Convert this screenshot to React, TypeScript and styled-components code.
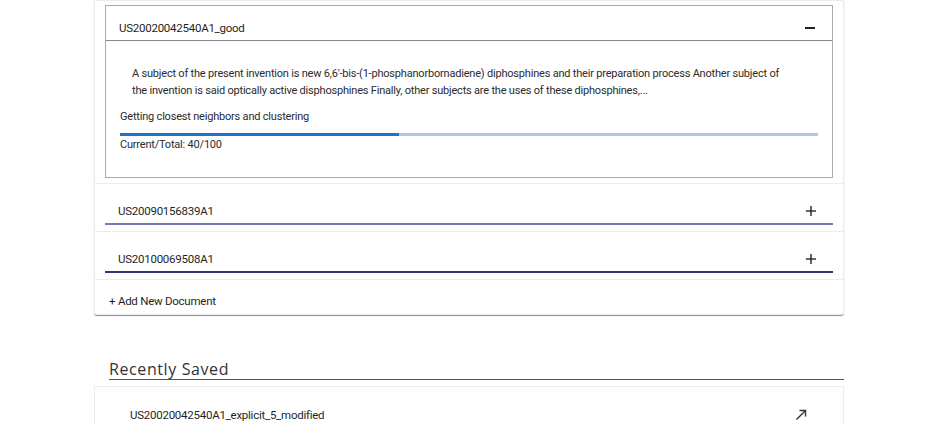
import React from "react";
import styled, { createGlobalStyle } from "styled-components";

const GlobalStyle = createGlobalStyle`
  html, body { margin: 0; padding: 0; background: #ffffff; }
  body {
    font-family: Roboto, "Liberation Sans", Arial, sans-serif;
    color: #222;
    -webkit-font-smoothing: antialiased;
  }
`;

const Page = styled.div`
  width: 750px;
  margin: 0 auto;
  display: flex;
  flex-direction: column;
`;

const Card = styled.div`
  border: 1px solid #ececec;
  border-radius: 0 0 3px 3px;
  box-shadow: 0 1px 1px rgba(0, 0, 0, 0.45);
  display: flex;
  flex-direction: column;
`;

const ItemWrap = styled.div`
  padding: 6px 10px;
  border-bottom: 1px solid #ececec;
  &:first-child {
    padding-top: 4px;
    padding-bottom: 5px;
  }
`;

const Expanded = styled.div`
  border: 1px solid #a9a9a9;
`;

const Header = styled.div<{ $line: string; $w: number }>`
  height: 35px;
  box-sizing: border-box;
  display: flex;
  align-items: flex-end;
  justify-content: space-between;
  padding: 0 17px 5px 13px;
  border-bottom: ${(p) => p.$w}px solid ${(p) => p.$line};
  font-size: 11.5px;
  line-height: 14px;
  letter-spacing: -0.25px;
  color: #1f1f1f;
`;

const IconBox = styled.span`
  display: flex;
  width: 10px;
  height: 14px;
  align-items: center;
  justify-content: center;
`;

const Body = styled.div`
  padding: 16px 14px 24px;
  display: flex;
  flex-direction: column;
  font-size: 11px;
  line-height: 17px;
  letter-spacing: -0.2px;
  color: #2b2b2b;
`;

const Abstract = styled.p`
  margin: 8px 0 0 12px;
  padding-right: 26px;
`;

const Status = styled.div`
  margin-top: 9px;
`;

const Track = styled.div`
  margin-top: 8px;
  height: 3px;
  background: #a7cbf0;
  display: flex;
`;

const Fill = styled.div`
  height: 100%;
  background: #1f73cc;
`;

const AddRow = styled.div`
  padding: 14px 14px 6px;
  font-size: 11.5px;
  line-height: 14px;
  letter-spacing: -0.25px;
  color: #1f1f1f;
`;

const SectionTitle = styled.h2`
  margin: 44px 0 0 15px;
  font-family: "Open Sans", "Noto Sans", sans-serif;
  font-weight: 400;
  font-size: 16px;
  line-height: 20px;
  color: #333;
  border-bottom: 1px solid #555;
  letter-spacing: 0.6px;
`;

const SavedCard = styled.div`
  margin-top: 6px;
  border: 1px solid #ececec;
  height: 80px;
`;

const SavedRow = styled.div`
  display: flex;
  justify-content: space-between;
  align-items: center;
  padding: 21px 36px 0 35px;
  font-size: 11.5px;
  line-height: 14px;
  letter-spacing: -0.25px;
  color: #1f1f1f;
`;

const Minus = () => (
  <svg width="10" height="10" viewBox="0 0 10 10">
    <line x1="0" y1="5" x2="10" y2="5" stroke="#222" strokeWidth="2" />
  </svg>
);

const Plus = () => (
  <svg width="10" height="10" viewBox="0 0 10 10">
    <line x1="0" y1="5" x2="10" y2="5" stroke="#222" strokeWidth="1.4" />
    <line x1="5" y1="0" x2="5" y2="10" stroke="#222" strokeWidth="1.4" />
  </svg>
);

const NorthEast = () => (
  <svg width="12" height="12" viewBox="0 0 12 12" fill="none" stroke="#333" strokeWidth="1.4">
    <line x1="1.5" y1="10.5" x2="10.5" y2="1.5" />
    <polyline points="4.5,1.5 10.5,1.5 10.5,7.5" />
  </svg>
);

const collapsed = [
  { id: "US20090156839A1", line: "#7676bb" },
  { id: "US20100069508A1", line: "#34347a" },
];

export default function App() {
  const current = 40;
  const total = 100;
  return (
    <>
      <GlobalStyle />
      <Page>
        <Card>
          <ItemWrap>
            <Expanded>
              <Header $line="#8a8a8a" $w={1}>
                <span>US20020042540A1_good</span>
                <IconBox>
                  <Minus />
                </IconBox>
              </Header>
              <Body>
                <Abstract>
                  A subject of the present invention is new 6,6′-bis-(1-phosphanorbornadiene) diphosphines and their
                  preparation process Another subject of the invention is said optically active disphosphines Finally,
                  other subjects are the uses of these diphosphines,...
                </Abstract>
                <Status>Getting closest neighbors and clustering</Status>
                <Track>
                  <Fill style={{ width: `${(current / total) * 100}%` }} />
                </Track>
                <div>
                  Current/Total: {current}/{total}
                </div>
              </Body>
            </Expanded>
          </ItemWrap>
          {collapsed.map((c) => (
            <ItemWrap key={c.id}>
              <Header $line={c.line} $w={2}>
                <span>{c.id}</span>
                <IconBox>
                  <Plus />
                </IconBox>
              </Header>
            </ItemWrap>
          ))}
          <AddRow>+ Add New Document</AddRow>
        </Card>
        <SectionTitle>Recently Saved</SectionTitle>
        <SavedCard>
          <SavedRow>
            <span>US20020042540A1_explicit_5_modified</span>
            <NorthEast />
          </SavedRow>
        </SavedCard>
      </Page>
    </>
  );
}
